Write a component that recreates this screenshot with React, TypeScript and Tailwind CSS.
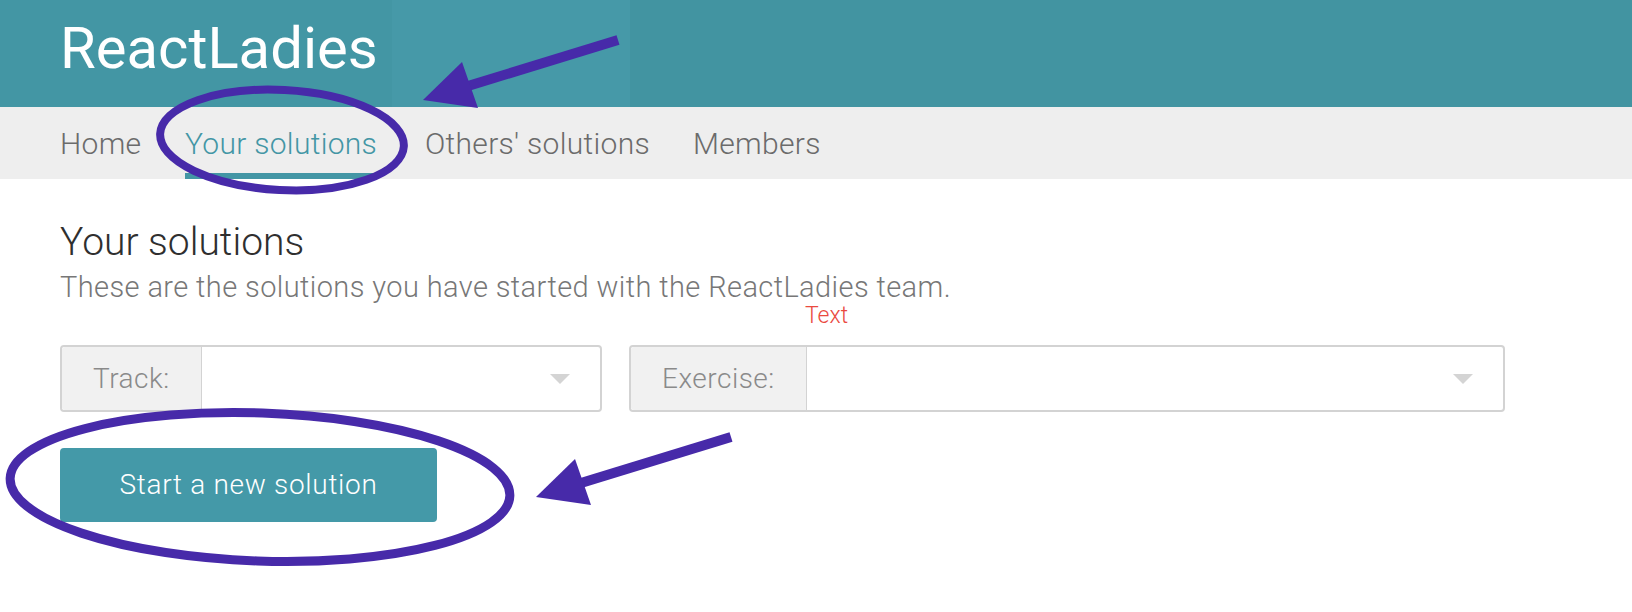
import React from "react";

const navItems = [
  { label: "Home", width: "w-[76px]" },
  { label: "Your solutions", width: "w-[191px]" },
  { label: "Others' solutions", width: "w-[219px]" },
  { label: "Members", width: "w-[121px]" },
];

function SelectGroup({ label, className }: { label: string; className: string }) {
  return (
    <div className={`flex h-[67px] rounded-[4px] border-2 border-[#d3d3d3] bg-white ${className}`}>
      <div className="flex items-center px-[31px] bg-[#f1f1f1] border-r border-[#d3d3d3] text-[28px] tracking-[0.5px] font-light text-[#8a8a8a] rounded-l-[3px]">
        {label}
      </div>
      <div className="flex-1 flex items-center justify-end pr-[30px]">
        <svg width="20" height="10" viewBox="0 0 20 10">
          <polygon points="0,0 20,0 10,10" fill="#d4d4d4" />
        </svg>
      </div>
    </div>
  );
}

function Annotations() {
  const purple = "#472aa9";
  return (
    <svg className="absolute inset-0 pointer-events-none" width="1632" height="612" viewBox="0 0 1632 612">
      <ellipse cx="282" cy="140" rx="122" ry="50" fill="none" stroke={purple} strokeWidth="8" transform="rotate(3 282 140)" />
      <line x1="618" y1="40" x2="468" y2="86" stroke={purple} strokeWidth="10" />
      <polygon points="423,100 462,62 478,108" fill={purple} />
      <ellipse cx="260" cy="487" rx="250" ry="74" fill="none" stroke={purple} strokeWidth="9" transform="rotate(2 260 487)" />
      <line x1="731" y1="437" x2="581" y2="483" stroke={purple} strokeWidth="10" />
      <polygon points="536,497 575,459 591,505" fill={purple} />
    </svg>
  );
}

export default function App() {
  return (
    <div className="relative w-[1632px] h-[612px] overflow-hidden bg-white font-['Roboto',sans-serif]">
      <header className="h-[107px] pl-[60px] pt-[19px] bg-[linear-gradient(to_right,#4396a4_392px,#4699a8_392px,#4699a8_630px,#4294a1_630px)]">
        <h1 className="text-[58px] leading-none text-white">ReactLadies</h1>
      </header>

      <nav className="h-[72px] bg-[#eeeeee] pl-[60px] flex gap-[49px]">
        {navItems.map((item) => {
          const active = item.label === "Your solutions";
          return (
            <div
              key={item.label}
              className={`flex items-center pt-[6px] text-[30px] tracking-[0.3px] font-light whitespace-nowrap border-b-[6px] ${item.width} ${
                active ? "text-[#4396a5] border-[#4396a5]" : "text-[#6b6b6b] border-transparent"
              }`}
            >
              {item.label}
            </div>
          );
        })}
      </nav>

      <main className="px-[60px] pt-[44px]">
        <h2 className="text-[39px] font-light leading-none text-[#2f2f2f]">Your solutions</h2>
        <p className="text-[29px] tracking-[0.4px] font-light leading-none text-[#777777] mt-[11px]">
          These are the solutions you have started with the ReactLadies team.
        </p>
        <div className="pl-[745px] text-[23px] font-light leading-none text-[#ea4a3f] mt-[2px]">Text</div>

        <div className="flex gap-[27px] mt-[18px]">
          <SelectGroup label="Track:" className="w-[542px]" />
          <SelectGroup label="Exercise:" className="w-[876px]" />
        </div>

        <button className="mt-[36px] w-[377px] h-[74px] rounded-[4px] bg-[#4499a8] text-white text-[28px] tracking-[0.7px] font-light">
          Start a new solution
        </button>
      </main>

      <Annotations />
    </div>
  );
}
